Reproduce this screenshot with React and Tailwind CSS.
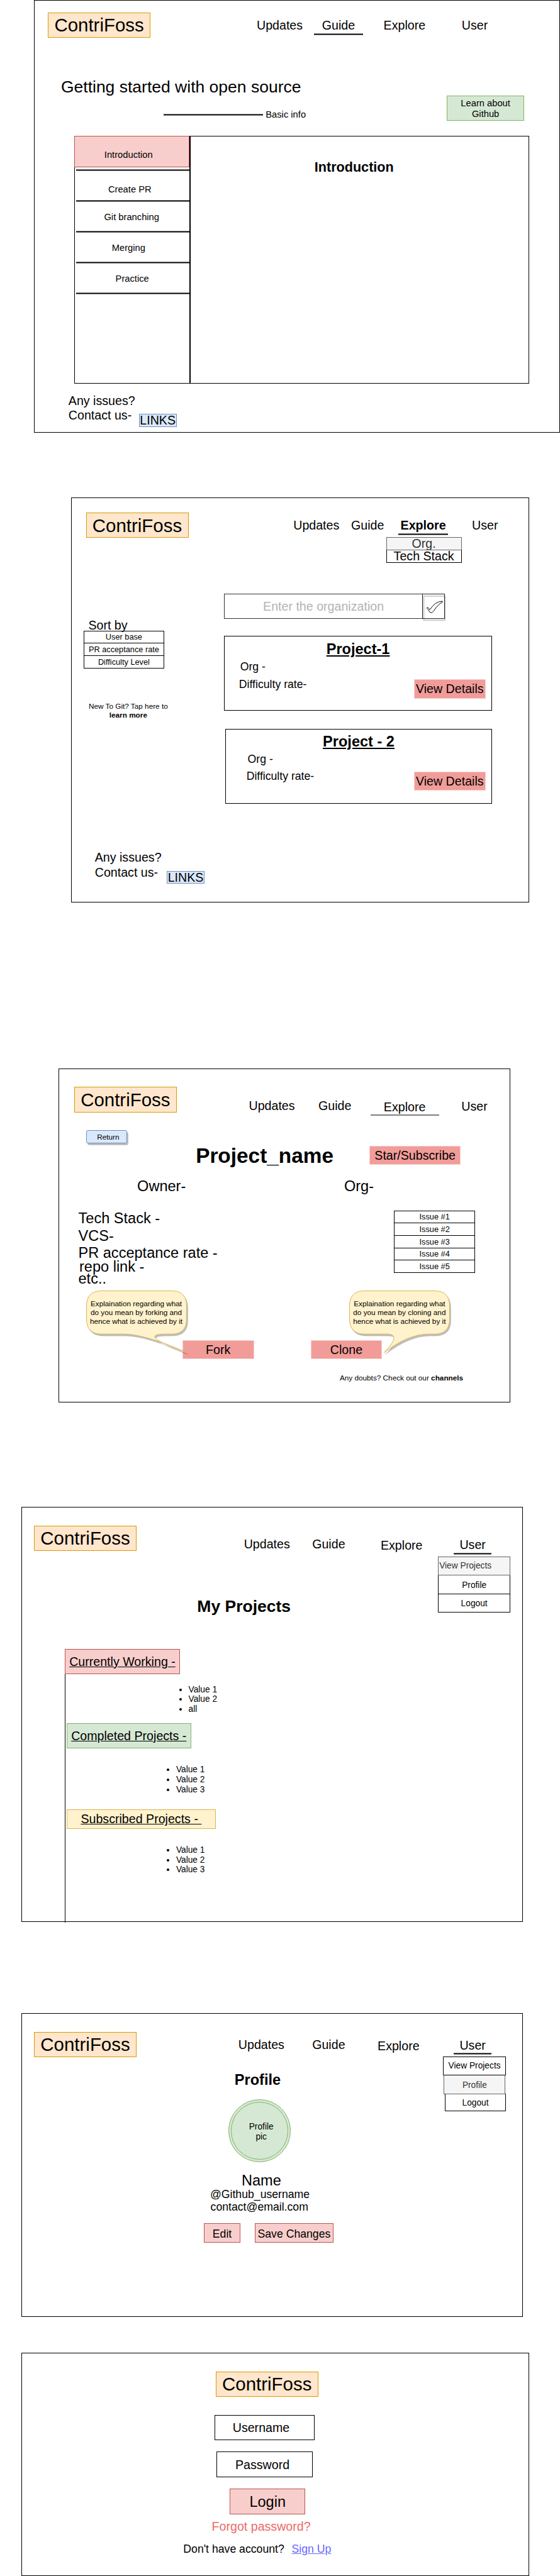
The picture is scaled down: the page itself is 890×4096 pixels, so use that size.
import React from "react";
import clsx from "clsx";

const RULE =
  "h-[3px] shrink-0 bg-[linear-gradient(#7f7f7f_33%,#000_33%,#000_67%,#7f7f7f_67%)]";

function Frame({ className, children }) {
  return <section className={clsx("flex flex-col border border-black bg-white", className)}>{children}</section>;
}

function Logo({ className }) {
  return (
    <div
      className={clsx(
        "flex h-[41px] w-[166px] shrink-0 items-center justify-center border border-[#d79b00] bg-[#ffe6cc] text-[30px] leading-[36px]",
        className
      )}
    >
      ContriFoss
    </div>
  );
}

function NavItem({ className, children, label }) {
  return (
    <div className={clsx("relative w-[80px] shrink-0 text-center text-[20px] leading-[24px]", className)}>
      {label}
      {children}
    </div>
  );
}

function Button({ className, children }) {
  return (
    <div
      className={clsx(
        "flex h-[31px] shrink-0 items-center justify-center whitespace-nowrap border border-[#f8cecc] bg-[#f19c99] pt-[1.2px] text-[20px] leading-[24px]",
        className
      )}
    >
      {children}
    </div>
  );
}

function Contact({ className, textWidth }) {
  return (
    <div className={clsx("flex text-[20px] leading-[24px]", className)}>
      <div className={clsx("shrink-0", textWidth)}>
        Any issues?
        <br />
        Contact us-
      </div>
      <div className="mt-[33px] flex h-[21px] w-[61px] items-center justify-center border border-[#6c8ebf] bg-[#dae8fc] pt-[1px]">
        LINKS
      </div>
    </div>
  );
}

function SideItem({ className, children }) {
  return (
    <>
      <div className={clsx("h-[47px] shrink-0 text-center leading-[18px]", className)}>{children}</div>
      <div className={clsx(RULE, "ml-[3px]")} />
    </>
  );
}

function GuideFrame() {
  return (
    <Frame className="ml-[55px] h-[701px] w-[851px]">
      <header className="flex h-[60px] shrink-0">
        <Logo className="ml-[21.5px] mt-[19px]" />
        <nav className="mt-[28.1px] flex">
          <NavItem className="ml-[169.2px]" label="Updates" />
          <NavItem className="ml-[15.1px]" label="Guide">
            <div className={clsx(RULE, "mt-[0.9px]")} />
          </NavItem>
          <NavItem className="ml-[26.9px]" label="Explore" />
          <NavItem className="ml-[33.8px]" label="User" />
        </nav>
      </header>
      <h1 className="ml-[42.7px] mt-[64.2px] text-[27px] leading-[32px]">Getting started with open source</h1>
      <div className="-mt-[2.2px] flex h-[41px] shrink-0 text-[15px] leading-[18px]">
        <div className={clsx(RULE, "ml-[209px] mt-[29px] w-[161px]")} />
        <div className="ml-[4px] mt-[22.7px] w-[66.5px] whitespace-nowrap">Basic info</div>
        <div className="ml-[226.3px] flex w-[126px] items-center justify-center border border-[#82b366] bg-[#d5e8d4] pt-[1.8px] text-center">
          Learn about
          <br />
          Github
        </div>
      </div>
      <div className="ml-[64px] mt-[24px] flex h-[401px] w-[736px] shrink-0 border border-black">
        <aside className="-ml-px -mt-px flex w-[186px] shrink-0 flex-col text-[15px]">
          <div className="mb-[3px] h-[51px] shrink-0 border border-[#b85450] bg-[#f8cecc] pr-[10px] pt-[21.7px] text-center leading-[18px]">
            Introduction
          </div>
          <div className={clsx(RULE, "ml-[3px]")} />
          <SideItem className="pr-[6px] pt-[20.9px]">Create PR</SideItem>
          <SideItem className="pt-[15.9px]">Git branching</SideItem>
          <SideItem className="pr-[10px] pt-[15.9px]">Merging</SideItem>
          <SideItem className="pl-[2px] pt-[15.9px]">Practice</SideItem>
        </aside>
        <div className="w-[2.1px] shrink-0 bg-black" />
        <h2 className="grow pr-[17px] pt-[36.3px] text-center text-[22px] font-bold leading-[26px]">Introduction</h2>
      </div>
      <Contact className="ml-[54.8px] mt-[16px]" textWidth="w-[114px]" />
    </Frame>
  );
}

function CheckButton() {
  return (
    <div className="-ml-px h-[41px] w-[37px] border border-[#222]">
      <svg className="-ml-px -mt-px block overflow-visible" width="37" height="41" viewBox="0 0 37 41" fill="none">
        <rect x="2.5" y="4" width="34.5" height="39" stroke="#000" strokeOpacity="0.2" strokeWidth="2" />
        <path
          d="M7.2 23.2Q9 20.5 12.4 26Q21 12.5 32.5 12.2L33 13.4Q24.5 18 18.6 28Q14.8 32.8 11.6 29.2Q10.5 25.5 7.2 23.2Z"
          stroke="#000"
          strokeWidth="1"
        />
      </svg>
    </div>
  );
}

function ProjectCard({ className, title, orgClass, rowClass, buttonClass }) {
  return (
    <article className={clsx("flex h-[121px] flex-col border border-black text-[18px] leading-[22px]", className)}>
      <h3 className="text-center text-[24px] font-bold leading-[29px] underline">{title}</h3>
      <p className={orgClass}>Org -</p>
      <div className={clsx("mt-[6px] flex justify-between pr-[9.3px]", rowClass)}>
        <p>Difficulty rate-</p>
        <Button className={clsx("w-[115.6px]", buttonClass)}>View Details</Button>
      </div>
    </article>
  );
}

function ExploreFrame() {
  return (
    <Frame className="ml-[115px] mt-[104px] h-[656px] w-[741px]">
      <header className="flex h-[65px] shrink-0">
        <Logo className="ml-[23px] mt-[24px]" />
        <nav className="mt-[33.1px] flex">
          <NavItem className="ml-[167px]" label="Updates" />
          <NavItem className="ml-[3px]" label="Guide" />
          <NavItem className="ml-[10px]" label={<b>Explore</b>}>
            <div className={clsx(RULE, "mt-[0.9px]")} />
            <div className="absolute -left-[20px] top-[30.9px] w-[122px]">
              <div className="relative z-10 flex h-[21px] items-center justify-center border border-[#666] bg-[#f5f5f5] pt-[1px] text-[#333]">
                Org.
              </div>
              <div className="relative z-10 -mt-px flex h-[21px] items-center justify-center border border-black border-t-[#666] pt-[1px]">
                Tech Stack
              </div>
            </div>
          </NavItem>
          <NavItem className="ml-[20px]" label="User" />
        </nav>
      </header>
      <div className="flex">
        <div className="w-[247px] shrink-0">
          <div className="ml-[27px] mt-[129.6px] text-[20px] leading-[24px]">Sort by</div>
          <ul className="-mt-[3.6px] ml-[19px] w-[131px] text-center text-[13px] leading-[19px]">
            <li className="h-[21px] border border-black pt-[0.7px]">User base</li>
            <li className="-mt-px h-[21px] border border-black pt-[0.7px]">PR acceptance rate</li>
            <li className="-mt-px h-[21px] border border-black pt-[0.7px]">Difficulty Level</li>
          </ul>
          <p className="ml-[21.6px] mt-[54.6px] w-[140px] text-center text-[12px] leading-[14.4px]">
            New To Git? Tap here to
            <br />
            <b>learn more</b>
          </p>
          <Contact className="ml-[37.5px] mt-[211.6px]" textWidth="w-[116.5px]" />
        </div>
        <div className="w-[436px] shrink-0">
          <div className="mt-[90px] flex text-[20px]">
            <div className="flex h-[41px] w-[321px] items-center justify-center border border-[#333] pt-[1px] text-[#b3b3b3]">
              Enter the organization
            </div>
            <CheckButton />
          </div>
          <ProjectCard
            className="mt-[28px] w-[433px] pt-[5.9px]"
            title="Project-1"
            orgClass="ml-[24.7px] mt-[3.8px]"
            rowClass="pl-[22.8px]"
            buttonClass="mt-[2.3px]"
          />
          <ProjectCard
            className="ml-[2px] mt-[29px] w-[431px] pt-[5.3px]"
            title="Project - 2"
            orgClass="ml-[34.8px] mt-[3.4px]"
            rowClass="pl-[32.8px]"
            buttonClass="mt-[2.8px]"
          />
        </div>
      </div>
    </Frame>
  );
}

const BUBBLE_LEFT =
  "M25 .5H138Q162.5 .5 162.5 25V46Q162.5 70.5 138 70.5H129Q80 70.5 163.5 100.7Q95 70.5 61 70.5H25Q.5 70.5 .5 46V25Q.5 .5 25 .5Z";
const BUBBLE_RIGHT =
  "M25 .5H138Q162.5 .5 162.5 25V46Q162.5 70.5 138 70.5H129Q95 70.5 56.3 100.7Q86 70.5 61 70.5H25Q.5 70.5 .5 46V25Q.5 .5 25 .5Z";

function Bubble({ className, d, children }) {
  return (
    <div className={clsx("relative z-10 h-[71px] w-[163px] shrink-0", className)}>
      <svg className="absolute left-0 top-0 overflow-visible" width="163" height="71" viewBox="0 0 163 71">
        <path d={d} transform="translate(2 3)" fill="#000" fillOpacity="0.25" stroke="#000" strokeOpacity="0.1" />
        <path d={d} fill="#fff2cc" stroke="#d6b656" />
      </svg>
      <p className="relative pt-[14.4px] text-center text-[12px] leading-[14.2px]">{children}</p>
    </div>
  );
}

function ProjectFrame() {
  return (
    <Frame className="ml-[95px] mt-[269px] h-[541px] w-[731px]">
      <header className="flex h-[80px] shrink-0">
        <Logo className="ml-[24px] mt-[29px]" />
        <nav className="mt-[48.1px] flex">
          <NavItem className="ml-[114px]" label="Updates" />
          <NavItem className="ml-[22px]" label="Guide" />
          <NavItem className="ml-[33px] mt-[2px]" label="Explore">
            <div className={clsx(RULE, "-mx-[15.5px] -mt-[1.1px]")} />
          </NavItem>
          <NavItem className="ml-[33px] mt-[1px]" label="User" />
        </nav>
      </header>
      <div className="ml-[44px] mt-[19px] flex h-[21px] w-[66px] shrink-0 items-center justify-center rounded-[3px] border border-[#6c8ebf] bg-[#dae8fc] pl-[4px] text-[12px] shadow-[2px_3px_0_rgba(0,0,0,0.25)]">
        Return
      </div>
      <div className="flex h-[40px] shrink-0">
        <h2 className="ml-[212.3px] w-[240px] text-center text-[34px] font-bold leading-[40px]">Project_name</h2>
        <Button className="ml-[49.5px] mt-[4px] w-[148px]">Star/Subscribe</Button>
      </div>
      <div className="mt-[16.6px] flex text-center text-[24px] leading-[28px]">
        <div className="ml-[115.4px] w-[100px]">Owner-</div>
        <div className="ml-[219.6px] w-[100px]">Org-</div>
      </div>
      <div className="mt-[24px] flex h-[124.8px] shrink-0">
        <div className="ml-[30.8px] w-[511px] shrink-0 text-[24px] leading-[28px]">
          <p>Tech Stack -</p>
          <p className="-mt-[0.3px]">VCS-</p>
          <p>PR acceptance rate -</p>
          <p className="-mt-[6px] ml-[1.5px]">repo link -</p>
          <p className="-mt-[8px]">etc..</p>
        </div>
        <ul className="mt-[0.4px] w-[131px] text-center text-[13px] leading-[19px]">
          <li className="h-[21px] border border-black pt-[0.7px]">Issue #1</li>
          <li className="-mt-px h-[21px] border border-black pt-[0.7px]">Issue #2</li>
          <li className="-mt-px h-[21px] border border-black pt-[0.7px]">Issue #3</li>
          <li className="-mt-px h-[21px] border border-black pt-[0.7px]">Issue #4</li>
          <li className="-mt-px h-[21px] border border-black pt-[0.7px]">Issue #5</li>
        </ul>
      </div>
      <div className="mt-[5.6px] flex h-[111px] shrink-0">
        <Bubble className="ml-[43px]" d={BUBBLE_LEFT}>
          Explaination regarding what
          <br />
          do you mean by forking and
          <br />
          hence what is achieved by it
        </Bubble>
        <Button className="-ml-[7px] mt-[80px] w-[116px]">Fork</Button>
        <Button className="ml-[92px] mt-[80px] w-[115px]">Clone</Button>
        <Bubble className="-ml-[53px]" d={BUBBLE_RIGHT}>
          Explaination regarding what
          <br />
          do you mean by cloning and
          <br />
          hence what is achieved by it
        </Bubble>
      </div>
      <p className="ml-[453.8px] mt-[22.8px] text-[12px] leading-[14.4px]">
        Any doubts? Check out our <b>channels</b>
      </p>
    </Frame>
  );
}

function ValueList({ className, items }) {
  return (
    <ul className={clsx("list-disc text-[14px] leading-[16px]", className)}>
      {items.map((item) => (
        <li key={item}>{item}</li>
      ))}
    </ul>
  );
}

function MyProjectsFrame() {
  return (
    <Frame className="ml-[35px] mt-[169px] h-[672px] w-[811px]">
      <header className="flex h-[70px] shrink-0">
        <Logo className="ml-[19px] mt-[29px]" />
        <nav className="mt-[48.1px] flex">
          <NavItem className="ml-[171px]" label="Updates" />
          <NavItem className="ml-[20px]" label="Guide" />
          <NavItem className="ml-[38px] mt-[2px]" label="Explore" />
          <NavItem className="ml-[35px] mt-[1px]" label="User">
            <div className={clsx(RULE, "mx-[9.5px] -mt-[0.1px]")} />
            <div className="absolute -left-[16px] top-[29.9px] w-[117px] text-[14px] leading-[28px]">
              <div className="relative z-10 h-[31px] border border-[#666] bg-[#f5f5f5] pl-[1px] pt-[0.6px] text-left leading-[29px] text-[#333]">
                View Projects
              </div>
              <div className="-mt-px h-[31px] border border-black pt-[1.5px]">Profile</div>
              <div className="-mt-px h-[31px] border border-black pt-[1.5px]">Logout</div>
            </div>
          </NavItem>
        </nav>
      </header>
      <h2 className="ml-[258.8px] mt-[74.2px] w-[200px] text-center text-[27px] font-bold leading-[32px]">
        My Projects
      </h2>
      <div className="ml-[69px] mt-[52.8px] h-[443px] shrink-0 border-l border-black text-[20px]">
        <div className="-ml-px flex h-[41px] w-[186px] items-center justify-center border border-[#b85450] bg-[#f8cecc] pt-[1px] underline">
          Currently Working -
        </div>
        <ValueList className="ml-[199px] mt-[16.7px]" items={["Value 1", "Value 2", "all"]} />
        <div className="ml-[1.5px] mt-[14.3px] flex h-[41px] w-[202px] items-center justify-center border border-[#82b366] bg-[#d5e8d4] pt-[1px] underline">
          Completed Projects -
        </div>
        <ValueList className="ml-[179px] mt-[26.7px]" items={["Value 1", "Value 2", "Value 3"]} />
        <div className="ml-[1.5px] mt-[24.3px] flex h-[31px] w-[242px] items-center justify-center whitespace-pre border border-[#d6b656] bg-[#fff2cc] pt-[1px] underline">
          {"Subscribed Projects -\u00a0"}
        </div>
        <ValueList className="ml-[179px] mt-[26.7px]" items={["Value 1", "Value 2", "Value 3"]} />
      </div>
    </Frame>
  );
}

function ProfileFrame() {
  return (
    <Frame className="ml-[35px] mt-[148px] h-[492px] w-[811px]">
      <header className="flex h-[70px] shrink-0">
        <Logo className="ml-[19px] mt-[29px]" />
        <nav className="mt-[38.1px] flex">
          <NavItem className="ml-[162px]" label="Updates" />
          <NavItem className="ml-[29px]" label="Guide" />
          <NavItem className="ml-[33px] mt-[2px]" label="Explore" />
          <NavItem className="ml-[40px] mt-[1px]" label="User">
            <div className={clsx(RULE, "mx-[9.5px] -mt-[0.1px]")} />
            <div className="absolute -left-[8px] top-[29.9px] w-[102px] text-[14px] leading-[29px]">
              <div className="h-[31px] border border-black pt-[0.5px]">View Projects</div>
              <div className="-mt-px ml-[1.5px] mr-[1px] h-[31px] border border-[#666] border-t-black bg-[#f5f5f5] pt-[1.5px] leading-[28px] text-[#333]">
                Profile
              </div>
              <div className="-mt-px ml-[3px] h-[29px] border border-black border-t-[#666] pt-[0.5px]">Logout</div>
            </div>
          </NavItem>
        </nav>
      </header>
      <h2 className="ml-[281px] mt-[23.9px] w-[200px] text-center text-[24px] font-bold leading-[28px]">Profile</h2>
      <div className="ml-[333.8px] mt-[16.8px] h-[101px] w-[101px] shrink-0 rounded-full border border-[#82b366] bg-[#d5e8d4] p-[3px]">
        <div className="flex h-full items-center justify-center rounded-full border border-[#82b366] pl-[5px] pt-[3.2px] text-center text-[14px] leading-[16px]">
          Profile
          <br />
          pic
        </div>
      </div>
      <p className="ml-[287px] mt-[16.6px] w-[200px] text-center text-[24px] leading-[28px]">Name</p>
      <p className="-mt-[1.5px] ml-[284.6px] w-[200px] text-center text-[18px] leading-[20px]">@Github_username</p>
      <p className="ml-[283.8px] w-[200px] text-center text-[18px] leading-[20px]">contact@email.com</p>
      <div className="mt-[16.2px] flex text-[18px]">
        <div className="ml-[294px] flex h-[31px] w-[59px] items-center justify-center border border-[#b85450] bg-[#f8cecc] pt-[4.8px]">
          Edit
        </div>
        <div className="ml-[23px] flex h-[31px] w-[128px] items-center justify-center whitespace-nowrap border border-[#b85450] bg-[#f8cecc] pt-[4.8px]">
          Save Changes
        </div>
      </div>
    </Frame>
  );
}

function LoginFrame() {
  return (
    <Frame className="ml-[35px] mt-[58px] h-[361px] w-[821px]">
      <Logo className="ml-[313px] mt-[29px]" />
      <div className="ml-[311.3px] mt-[29px] flex h-[41px] w-[162px] shrink-0 items-center justify-center border border-black pr-[11.4px] pt-[3px] text-[20px]">
        Username
      </div>
      <div className="ml-[314px] mt-[19px] flex h-[41px] w-[156px] shrink-0 items-center justify-center border border-black pr-[6.6px] pt-[3px] text-[20px]">
        Password
      </div>
      <div className="ml-[336px] mt-[19px] flex h-[41px] w-[122px] shrink-0 items-center justify-center border border-[#b85450] bg-[#f8cecc] pt-[1.6px] text-[24px]">
        Login
      </div>
      <p className="ml-[286.7px] mt-[8.3px] w-[200px] text-center text-[20px] leading-[24px] text-[#ea6b66]">
        Forgot password?
      </p>
      <div className="ml-[260.7px] mt-[14px] flex gap-[12px] text-[18px] leading-[22px]">
        <span>Don't have account?</span>
        <span className="text-[#6666ff] underline">Sign Up</span>
      </div>
    </Frame>
  );
}

export default function App() {
  return (
    <main className="h-[4171px] w-[906px] overflow-hidden bg-white font-['Liberation_Sans',Arial,sans-serif] text-black [zoom:0.982]">
      <GuideFrame />
      <ExploreFrame />
      <ProjectFrame />
      <MyProjectsFrame />
      <ProfileFrame />
      <LoginFrame />
    </main>
  );
}
